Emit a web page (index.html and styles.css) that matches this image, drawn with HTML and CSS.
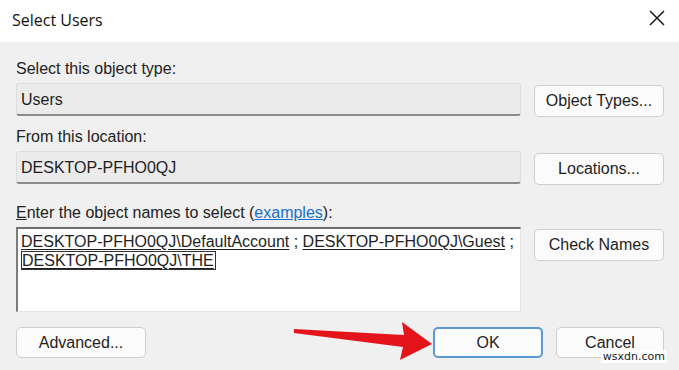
FILE: index.html
```html
<!DOCTYPE html>
<html lang="en">

<head>
    <meta charset="UTF-8">
    <meta name="viewport" content="width=device-width, initial-scale=1.0">
    <title>Select Users</title>
    <link rel="stylesheet" href="styles.css">
</head>

<body>
    <div class="dialog">
        <div class="titlebar">
            <span class="title">Select Users</span>
            <span class="close">
                <svg width="16" height="16" viewBox="0 0 16 16">
                    <path d="M1 1 L15 15 M15 1 L1 15" stroke="#1a1a1a" stroke-width="1.5" fill="none" />
                </svg>
            </span>
        </div>

        <div class="content">
            <div class="group">
                <div class="label">Select this object type:</div>
                <div class="field">Users</div>
                <button class="btn">Object Types...</button>
            </div>

            <div class="group">
                <div class="label">From this location:</div>
                <div class="field">DESKTOP-PFHO0QJ</div>
                <button class="btn">Locations...</button>
            </div>

            <div class="group group-names">
                <div class="label"><u>E</u>nter the object names to select (<a href="#">examples</a>):</div>
                <div class="names">
                    <u>DESKTOP-PFHO0QJ\DefaultAccount</u> ; <u>DESKTOP-PFHO0QJ\Guest</u> ;
                    <span class="focus"><u>DESKTOP-PFHO0QJ\THE</u></span>
                </div>
                <button class="btn">Check Names</button>
            </div>

            <div class="footer">
                <button class="btn">Advanced...</button>
                <div class="actions">
                    <button class="btn btn-ok">OK</button>
                    <button class="btn">Cancel</button>
                </div>
            </div>
        </div>

        <!-- red annotation arrow pointing at OK -->
        <svg class="arrow" width="150" height="45" viewBox="0 0 150 45">
            <path d="M0 10 L110 16 L108 3 L138 25 L106 41 L109 28 L0 14 Z" fill="#e4141b" />
        </svg>

        <span class="watermark">wsxdn.com</span>
    </div>
</body>

</html>
```

FILE: styles.css
```css
body,
html {
    margin: 0;
    padding: 0;
    background: #f0f0f0;
}

.dialog {
    width: 679px;
    height: 370px;
    position: relative;
    overflow: hidden;
    font-family: "Liberation Sans", Arial, sans-serif;
    font-size: 16px;
    color: #1e1e1e;
    background: #f0f0f0;
}

.titlebar {
    height: 42px;
    background: #ffffff;
    display: flex;
    justify-content: space-between;
    align-items: center;
    padding: 0 14px 0 12px;
}

.title {
    font-family: "Open Sans", "Noto Sans", sans-serif;
    font-size: 16px;
    color: #111;
    margin-top: -3px;
}

.close {
    display: flex;
    margin-top: -6px;
}

.content {
    padding: 17px 15px 0 16px;
}

.group {
    display: grid;
    grid-template-columns: 505px 130px;
    column-gap: 13px;
    align-items: start;
    margin-bottom: 10px;
}

.group-names {
    margin-top: 18px;
}

.label {
    grid-column: 1 / 3;
    line-height: 19px;
    margin-bottom: 5px;
    color: #222;
}

.label a {
    color: #1a6fc8;
}

.field {
    height: 33px;
    box-sizing: border-box;
    background: #ebebeb;
    border: 1px solid #dcdcdc;
    border-bottom: 2px solid #8c8c8c;
    border-radius: 3px;
    padding: 6px 4px;
    line-height: 19px;
}

.names {
    height: 85px;
    box-sizing: border-box;
    background: #ffffff;
    border-top: 2px solid #6e6e6e;
    border-left: 2px solid #7c7c7c;
    border-right: 1px solid #e2e2e2;
    border-bottom: 1px solid #e2e2e2;
    padding: 3px 3px;
    line-height: 19px;
    color: #1e1e1e;
}

.names u {
    text-underline-offset: 2px;
}

.focus {
    border: 1px solid #333;
    padding-right: 1px;
}

.btn {
    font-family: "Liberation Sans", Arial, sans-serif;
    font-size: 16px;
    color: #1e1e1e;
    height: 32px;
    margin-top: 2px;
    background: #fbfbfb;
    border: 1px solid #cfcfcf;
    border-radius: 5px;
    padding: 0;
}

.footer {
    display: flex;
    justify-content: space-between;
    margin-top: 15px;
}

.footer .btn {
    width: 130px;
    margin-top: 0;
    height: 31px;
}

.actions {
    display: flex;
    gap: 13px;
}

.actions .btn {
    width: 108px;
}

.actions .btn-ok {
    width: 110px;
    border: 2px solid #5a9ad0;
}

.arrow {
    position: absolute;
    left: 294px;
    top: 319px;
}

.watermark {
    position: absolute;
    right: 12px;
    bottom: 7px;
    font-family: "DejaVu Sans", sans-serif;
    font-size: 11px;
    color: #222;
    background: rgba(255, 255, 255, 0.85);
    padding: 0 2px;
}
```
